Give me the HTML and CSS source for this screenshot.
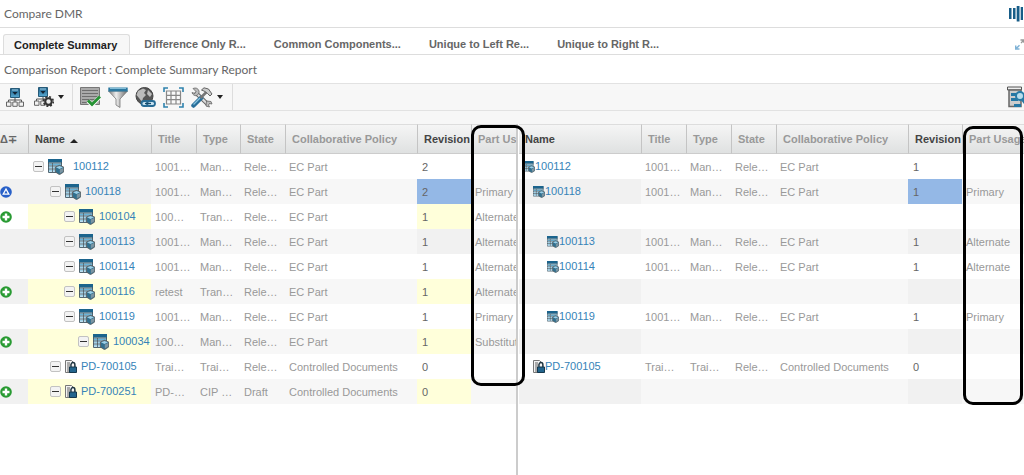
FILE: index.html
```html
<!DOCTYPE html>
<html lang="en">
<head>
<meta charset="utf-8">
<title>Compare DMR</title>
<link rel="stylesheet" href="styles.css">
</head>
<body>
<svg class="defs" aria-hidden="true">
  <defs>
    <linearGradient id="blue" x1="0" y1="0" x2="0" y2="1"><stop offset="0" stop-color="#1f5f87"/><stop offset="1" stop-color="#58a9d2"/></linearGradient>
    <linearGradient id="steel" x1="0" y1="0" x2="1" y2="0"><stop offset="0" stop-color="#777"/><stop offset=".4" stop-color="#eee"/><stop offset="1" stop-color="#666"/></linearGradient>
  </defs>
  <symbol id="part" viewBox="0 0 16 16">
    <path d="M.5 .5H13.500V13.500H.5Z" fill="#d9edf7" stroke="#536773"/>
    <path d="M0 0H14V3.500H0Z" fill="#1b648d"/>
    <path d="M1 4.500H4V6.500H1ZM5 4.500H13V6.500H5Z" fill="#69b3d8"/>
    <path d="M1 7.500H4V9.500H1ZM5 7.500H9V9.500H5ZM1 10.500H4V12.500H1ZM5 10.500H8V12.500H5Z" fill="#9dd0e8"/>
    <path d="M0 4H14M0 7H14M0 10H9M4.500 4V13" stroke="#45545d" stroke-width=".8"/>
    <path d="M11.500 6.300 15.700 8V13L11.500 15.700 7.400 13V8Z" fill="#31708f" stroke="#5e5c5a" stroke-width=".8"/>
    <path d="M8 8.300 11.500 7 15 8.300 11.500 10Z" fill="#9ed0e8"/>
    <path d="M11.800 10.500 15 9V12.500L11.800 14.500Z" fill="#7c95a2"/>
  </symbol>
  <symbol id="doc" viewBox="0 0 12 13">
    <path d="M.5 .5H6.500L9.500 3.500V12.500H.5Z" fill="#f3f3f3" stroke="#777"/>
    <path d="M2 3H5M2 5H6M2 7H5M2 9H4M2 11H4" stroke="#555" stroke-width=".9"/>
    <path d="M6 7V5A2 2.500 0 0 1 10 5V7" fill="none" stroke="#1e3440" stroke-width="1.300"/>
    <path d="M4.500 7H11.500V12.500H4.500Z" fill="#23658d" stroke="#16384d"/>
  </symbol>
  <symbol id="tree" viewBox="0 0 18 19">
    <path d="M4.500 .5H13.500V9.500H4.500Z" fill="url(#blue)" stroke="#275a78"/>
    <path d="M6 1.500H12V2.500H6Z" fill="#a7d5eb"/><path d="M6.500 4H11.500L9 7Z" fill="#123"/>
    <path d="M9 10V14M2.500 14V12H15.500V14" fill="none" stroke="#555"/>
    <path d="M.5 14H5V18.300H.5ZM6.800 14H11.200V18.300H6.800ZM13 14H17.500V18.300H13Z" fill="#f2f2f2" stroke="#666"/>
  </symbol>
</svg>

<header class="titlebar">
  <h1>Compare DMR</h1>
  <svg class="bars" viewBox="0 0 15 16" aria-hidden="true"><path d="M0 2H2.500V13H0ZM4 2H6.500V13H4ZM7.700 0H10.500V15.500H7.700ZM11.700 1H14V14H11.700Z" fill="#175d88"/></svg>
</header>

<nav class="tabs" role="tablist">
  <button class="tab active" role="tab" aria-selected="true">Complete Summary</button>
  <button class="tab" role="tab">Difference Only R...</button>
  <button class="tab" role="tab">Common Components...</button>
  <button class="tab" role="tab">Unique to Left Re...</button>
  <button class="tab" role="tab">Unique to Right R...</button>
  <button class="expand" aria-label="Expand"><svg viewBox="0 0 9 11"><path d="M5.500 1H9M9 1V4M6 4 9 1" fill="none" stroke="#999" stroke-width="1.300"/><path d="M.7 6.500V10H4.500M1 9.700 4.500 6.300" fill="none" stroke="#7fb2d6" stroke-width="1.500"/></svg></button>
</nav>

<h2 class="report">Comparison Report : Complete Summary Report</h2>

<div class="toolbar" role="toolbar">
  <div class="tools first">
    <button aria-label="Structure"><svg width="18" height="19"><use href="#tree"/></svg></button>
    <button class="menu" aria-label="Structure options">
      <svg width="20" height="20" viewBox="0 0 20 20"><use href="#tree" width="18" height="19"/><circle cx="14.500" cy="14.500" r="4.800" fill="none" stroke="#333" stroke-width="1.600" stroke-dasharray="2 1.770"/><circle cx="14.500" cy="14.500" r="3.200" fill="#eee" stroke="#333" stroke-width="2"/></svg>
      <span class="caret"></span>
    </button>
  </div>
  <div class="tools second">
    <button aria-label="Apply"><svg width="21" height="20" viewBox="0 0 21 20"><path d="M.5 .5H19.500V17.500H.5Z" fill="#aaa" stroke="#777"/><path d="M2 3.500H18M2 6.500H18M2 9.500H18M2 12.500H18M2 15.500H12" stroke="#6f6f6f"/><path d="M8 14 12 18 20 10" fill="none" stroke="#fff" stroke-width="4"/><path d="M8 13.500 12 17.500 20 9.500" fill="none" stroke="#269334" stroke-width="3"/></svg></button>
    <button aria-label="Filter"><svg width="20" height="21" viewBox="0 0 20 21"><path d="M.5 4 8 12V18L12 20.500V12L19.500 4Z" fill="url(#steel)" stroke="#777" stroke-width=".8"/><path d="M.3 .5H19.700V4.500H.3Z" fill="#2c789f"/><path d="M2 1.300H18" stroke="#9acfe6"/></svg></button>
    <button aria-label="Link"><svg width="21" height="21" viewBox="0 0 21 21"><circle cx="9.500" cy="9" r="8.500" fill="#555" stroke="#444"/><path d="M3 4 8 1.500 11 3 9 6 11 8 8 11 7 15 4 11 1.500 8ZM13 3 17 7 15 10 12 7Z" fill="#bbb"/><rect x="6.500" y="14" width="8" height="5" rx="2.500" fill="#c8e2f0" stroke="#276b95" stroke-width="1.800"/><rect x="12" y="14" width="8" height="5" rx="2.500" fill="#c8e2f0" stroke="#276b95" stroke-width="1.800"/><path d="M10 16.500H16" stroke="#174969" stroke-width="1.300"/></svg></button>
    <button aria-label="Fit columns"><svg width="21" height="21" viewBox="0 0 21 21"><path d="M1 5V1H5M16 1H20V5M20 16V20H16M5 20H1V16" fill="none" stroke="#2f82ad" stroke-width="1.600"/><path d="M3.500 4H17.500V17H3.500ZM3.500 8.300H17.500M3.500 12.600H17.500M8 4V17M13 4V17" fill="#fafafa" stroke="#888" stroke-width="1.200"/></svg></button>
    <button class="menu" aria-label="Tools">
      <svg width="22" height="21" viewBox="0 0 22 21"><path d="M4 5 17.500 18" stroke="#666" stroke-width="4.200"/><path d="M4 5 17.500 18" stroke="#ddd" stroke-width="2.200"/><path d="M2 1.500 5 4.500 4 6.500 1 5.500A4 4 0 0 0 6 8.500L8 6A4 4 0 0 0 4 1ZM15.500 14 20 14.500 21 17 18.500 16.500 17.500 18 18.500 20 15 19Z" fill="#bbb" stroke="#666" stroke-width=".8"/><path d="M2.500 18.500 10 11" stroke="#286f9a" stroke-width="4.500" stroke-linecap="round"/><path d="M2.500 17.500 9 11" stroke="#87c2de" stroke-width="1.300"/><path d="M9.500 11 16 4.500" stroke="#777" stroke-width="2.600"/><path d="M10.500 3 13 .8 17.500 2 21 7 19 9 16.500 6.500 14 4.500Z" fill="#ccc" stroke="#555" stroke-width=".9"/></svg>
      <span class="caret"></span>
    </button>
  </div>
  <button class="inspect" aria-label="Inspect"><svg width="17" height="22" viewBox="0 0 17 22"><path d="M.5 1H14.500V4H.5Z" fill="#eee" stroke="#555"/><path d="M2 4H14V20.500H2Z" fill="#ccc" stroke="#666" stroke-width="1.500"/><path d="M4 7H9V10H4ZM4 12H11V15H4ZM7 18H14V21H7Z" fill="#2577a4"/><circle cx="13" cy="10" r="4" fill="#b9dded" stroke="#287aa6" stroke-width="2"/><path d="M15 13 19 18" stroke="#287aa6" stroke-width="3"/></svg></button>
</div>

<main class="compare">
  <section class="pane left">
    <table>
      <colgroup><col class="c-change"><col class="c-name"><col class="c-short"><col class="c-type"><col class="c-short"><col class="c-policy"><col class="c-rev"><col></colgroup>
      <thead><tr><th class="sign">Δ∓</th><th class="dark">Name <span class="sort"></span></th><th>Title</th><th>Type</th><th>State</th><th>Collaborative Policy</th><th class="dark">Revision</th><th>Part Usage</th></tr></thead>
      <tbody>
        <tr><td class="mark"></td><td class="key"><div class="node root"><button class="fold" aria-label="Collapse"></button><svg class="ico"><use href="#part"/></svg><a href="#">100112</a></div></td><td>1001…</td><td>Man…</td><td>Rele…</td><td>EC Part</td><td class="rev">2</td><td></td></tr>
        <tr><td class="mark"><svg class="badge" viewBox="0 0 12 12"><circle cx="6" cy="6" r="5.800" fill="#2860c8"/><path d="M6 3 8.800 8.200H3.200Z" fill="none" stroke="#fff" stroke-width="1.300"/></svg></td><td class="key"><div class="node d1"><button class="fold" aria-label="Collapse"></button><svg class="ico"><use href="#part"/></svg><a href="#">100118</a></div></td><td>1001…</td><td>Man…</td><td>Rele…</td><td>EC Part</td><td class="rev changed">2</td><td>Primary</td></tr>
        <tr><td class="mark"><svg class="badge" viewBox="0 0 12 12"><circle cx="6" cy="6" r="5.800" fill="#289a32"/><path d="M6 2.500V9.500M2.500 6H9.500" stroke="#fff" stroke-width="2.400"/></svg></td><td class="key added"><div class="node d2"><button class="fold" aria-label="Collapse"></button><svg class="ico"><use href="#part"/></svg><a href="#">100104</a></div></td><td>100…</td><td>Tran…</td><td>Rele…</td><td>EC Part</td><td class="rev added">1</td><td>Alternate</td></tr>
        <tr><td class="mark"></td><td class="key"><div class="node d2"><button class="fold" aria-label="Collapse"></button><svg class="ico"><use href="#part"/></svg><a href="#">100113</a></div></td><td>1001…</td><td>Man…</td><td>Rele…</td><td>EC Part</td><td class="rev">1</td><td>Alternate</td></tr>
        <tr><td class="mark"></td><td class="key"><div class="node d2"><button class="fold" aria-label="Collapse"></button><svg class="ico"><use href="#part"/></svg><a href="#">100114</a></div></td><td>1001…</td><td>Man…</td><td>Rele…</td><td>EC Part</td><td class="rev">1</td><td>Alternate</td></tr>
        <tr><td class="mark"><svg class="badge" viewBox="0 0 12 12"><circle cx="6" cy="6" r="5.800" fill="#289a32"/><path d="M6 2.500V9.500M2.500 6H9.500" stroke="#fff" stroke-width="2.400"/></svg></td><td class="key added"><div class="node d2"><button class="fold" aria-label="Collapse"></button><svg class="ico"><use href="#part"/></svg><a href="#">100116</a></div></td><td>retest</td><td>Tran…</td><td>Rele…</td><td>EC Part</td><td class="rev added">1</td><td>Alternate</td></tr>
        <tr><td class="mark"></td><td class="key"><div class="node d2"><button class="fold" aria-label="Collapse"></button><svg class="ico"><use href="#part"/></svg><a href="#">100119</a></div></td><td>1001…</td><td>Man…</td><td>Rele…</td><td>EC Part</td><td class="rev">1</td><td>Primary</td></tr>
        <tr><td class="mark"><svg class="badge" viewBox="0 0 12 12"><circle cx="6" cy="6" r="5.800" fill="#289a32"/><path d="M6 2.500V9.500M2.500 6H9.500" stroke="#fff" stroke-width="2.400"/></svg></td><td class="key added"><div class="node d3"><button class="fold" aria-label="Collapse"></button><svg class="ico"><use href="#part"/></svg><a href="#">100034</a></div></td><td>100…</td><td>Man…</td><td>Rele…</td><td>EC Part</td><td class="rev added">1</td><td>Substitute</td></tr>
        <tr><td class="mark"></td><td class="key"><div class="node d1"><button class="fold" aria-label="Collapse"></button><svg class="ico-doc"><use href="#doc"/></svg><a href="#">PD-700105</a></div></td><td>Trai…</td><td>Trai…</td><td>Rele…</td><td>Controlled Documents</td><td class="rev">0</td><td></td></tr>
        <tr><td class="mark"><svg class="badge" viewBox="0 0 12 12"><circle cx="6" cy="6" r="5.800" fill="#289a32"/><path d="M6 2.500V9.500M2.500 6H9.500" stroke="#fff" stroke-width="2.400"/></svg></td><td class="key added"><div class="node d1"><button class="fold" aria-label="Collapse"></button><svg class="ico-doc"><use href="#doc"/></svg><a href="#">PD-700251</a></div></td><td>PD-…</td><td>CIP …</td><td>Draft</td><td>Controlled Documents</td><td class="rev added">0</td><td></td></tr>
      </tbody>
    </table>
  </section>
  <section class="pane right">
    <table>
      <colgroup><col class="c-name"><col class="c-short"><col class="c-short"><col class="c-short"><col class="c-policy"><col class="c-rev"><col></colgroup>
      <thead><tr><th class="dark">Name</th><th>Title</th><th>Type</th><th>State</th><th>Collaborative Policy</th><th class="dark">Revision</th><th>Part Usage</th></tr></thead>
      <tbody>
        <tr><td class="key"><div class="node root"><svg class="ico"><use href="#part"/></svg><a href="#">100112</a></div></td><td>1001…</td><td>Man…</td><td>Rele…</td><td>EC Part</td><td class="rev">1</td><td></td></tr>
        <tr><td class="key"><div class="node d1"><svg class="ico"><use href="#part"/></svg><a href="#">100118</a></div></td><td>1001…</td><td>Man…</td><td>Rele…</td><td>EC Part</td><td class="rev changed">1</td><td>Primary</td></tr>
        <tr><td class="key"></td><td></td><td></td><td></td><td></td><td class="rev"></td><td></td></tr>
        <tr><td class="key"><div class="node d2"><svg class="ico"><use href="#part"/></svg><a href="#">100113</a></div></td><td>1001…</td><td>Man…</td><td>Rele…</td><td>EC Part</td><td class="rev">1</td><td>Alternate</td></tr>
        <tr><td class="key"><div class="node d2"><svg class="ico"><use href="#part"/></svg><a href="#">100114</a></div></td><td>1001…</td><td>Man…</td><td>Rele…</td><td>EC Part</td><td class="rev">1</td><td>Alternate</td></tr>
        <tr><td class="key"></td><td></td><td></td><td></td><td></td><td class="rev"></td><td></td></tr>
        <tr><td class="key"><div class="node d2"><svg class="ico"><use href="#part"/></svg><a href="#">100119</a></div></td><td>1001…</td><td>Man…</td><td>Rele…</td><td>EC Part</td><td class="rev">1</td><td>Primary</td></tr>
        <tr><td class="key"></td><td></td><td></td><td></td><td></td><td class="rev"></td><td></td></tr>
        <tr><td class="key"><div class="node d1"><svg class="ico-doc"><use href="#doc"/></svg><a href="#">PD-700105</a></div></td><td>Trai…</td><td>Trai…</td><td>Rele…</td><td>Controlled Documents</td><td class="rev">0</td><td></td></tr>
        <tr><td class="key"></td><td></td><td></td><td></td><td></td><td class="rev"></td><td></td></tr>
      </tbody>
    </table>
  </section>
  <div class="callout callout-left"></div>
  <div class="callout callout-right"></div>
</main>
</body>
</html>
```

FILE: styles.css
```css
* { box-sizing: border-box; }
body {
  margin: 0;
  min-height: 100vh;
  display: flex;
  flex-direction: column;
  background: #fff;
  color: #999;
  font: 11px/16px "Liberation Sans", Arial, sans-serif;
  overflow: hidden;
}
button { border: 0; padding: 0; background: none; font: inherit; color: inherit; }
.defs { position: absolute; width: 0; height: 0; }
h1, h2 { margin: 0; font: 12px/16px Lato, "Noto Sans", sans-serif; color: #666; }

.titlebar {
  height: 28px;
  display: flex;
  align-items: center;
  justify-content: space-between;
  padding-left: 4px;
  border-bottom: 1px solid #ddd;
}
.bars { width: 15px; height: 16px; }

.tabs {
  height: 27px;
  display: flex;
  align-items: flex-end;
  padding-left: 3px;
  border-bottom: 1px solid #ddd;
}
.tab { height: 20px; padding: 0 14px; font-weight: bold; color: #666; white-space: nowrap; }
.tab.active {
  padding: 0 12px 0 10px;
  background: #f7f7f7;
  border: 1px solid #ddd;
  border-bottom: 0;
  border-radius: 3px 3px 0 0;
  color: #222;
}
.expand { margin-left: auto; height: 20px; }
.expand svg { display: block; width: 9px; height: 11px; }

.report { padding: 7px 4px 5px; }

.toolbar {
  height: 28px;
  display: flex;
  align-items: center;
  background: #f7f7f7;
  border-top: 1px solid #e2e2e2;
  border-bottom: 1px solid #e2e2e2;
}
.toolbar svg { display: block; flex: none; }
.tools { height: 100%; display: flex; align-items: center; border-right: 1px solid #ddd; }
.first { padding: 0 8px 0 6px; gap: 10px; }
.second { padding: 0 9px 0 7px; gap: 7px; }
.menu { display: flex; align-items: center; gap: 4px; }
.caret { border: 3px solid transparent; border-top: 4px solid #222; border-bottom: 0; }
.inspect { margin-left: auto; }

.compare {
  position: relative;
  flex: 1;
  display: flex;
  gap: 1px;
  border-top: 13px solid #f7f7f7;
}
.pane { overflow: hidden; }
.left { flex: 0 0 518px; border-right: 2px solid #ccc; }
.right { flex: 1; }
table { width: 100%; table-layout: fixed; border-collapse: separate; border-spacing: 0; }
.c-change { width: 28px; }
.c-name { width: 123px; }
.right .c-name { width: 122px; }
.c-short { width: 45px; }
.c-type { width: 44px; }
.c-policy { width: 132px; }
.c-rev { width: 54px; }
th, td { padding: 0 0 0 4px; text-align: left; white-space: nowrap; overflow: hidden; }
th {
  height: 30px;
  padding-left: 6px;
  background: linear-gradient(#f5f5f5, #dfe1e1);
  border-top: 1px solid #ddd;
  border-bottom: 1px solid #ccc;
  border-left: 1px solid #c4c4c4;
}
th:first-child { border-left: 0; }
th.dark { color: #444; }
th.sign { padding-left: 0; color: #666; }
.sort { display: inline-block; margin-left: 2px; border: 4px solid transparent; border-top: 0; border-bottom: 4px solid #222; }
td { height: 25px; }
tbody tr:nth-child(even) td { background: #f7f7f7; }
tbody tr:nth-child(even) .mark,
tbody tr:nth-child(even) .key,
tbody tr:nth-child(even) .rev { background: #f1f1f1; }
tbody tr .key.added, tbody tr .rev.added,
tbody tr:nth-child(even) .key.added, tbody tr:nth-child(even) .rev.added { background: #ffffda; }
tbody tr:nth-child(even) .rev.changed { background: #94b8e6; }
td.rev { padding-left: 5px; color: #666; }
td.mark, td.key { padding: 0; }
.badge { display: block; width: 12px; height: 12px; }

.node { display: flex; align-items: center; }
.node a { color: #3683b8; text-decoration: none; padding-bottom: 2px; }
.left .node { gap: 4px; }
.left .root { padding-left: 5px; }
.left .root a { padding-left: 5px; }
.left .d1 { padding-left: 22px; }
.left .d2 { padding-left: 36px; }
.left .d3 { padding-left: 50px; }
.right .root { padding-left: 4px; }
.right .d1 { padding-left: 14px; }
.right .d2 { padding-left: 28px; }
.fold {
  flex: none;
  width: 11px;
  height: 11px;
  display: grid;
  place-items: center;
  background: #f3f3f3;
  border: 1px solid #c2c2c2;
  border-radius: 2px;
}
.fold::before { content: ""; width: 7px; height: 1px; background: #333; }
.ico { flex: none; width: 16px; height: 16px; }
.ico-doc { flex: none; width: 12px; height: 13px; }
.right .ico { width: 12px; height: 12px; }

.callout { position: absolute; border: 3px solid #000; border-radius: 10px; pointer-events: none; }
.callout-left { left: 471px; top: 1px; width: 54px; height: 261px; }
.callout-right { right: 1px; top: 2px; width: 60px; height: 279px; }
```
